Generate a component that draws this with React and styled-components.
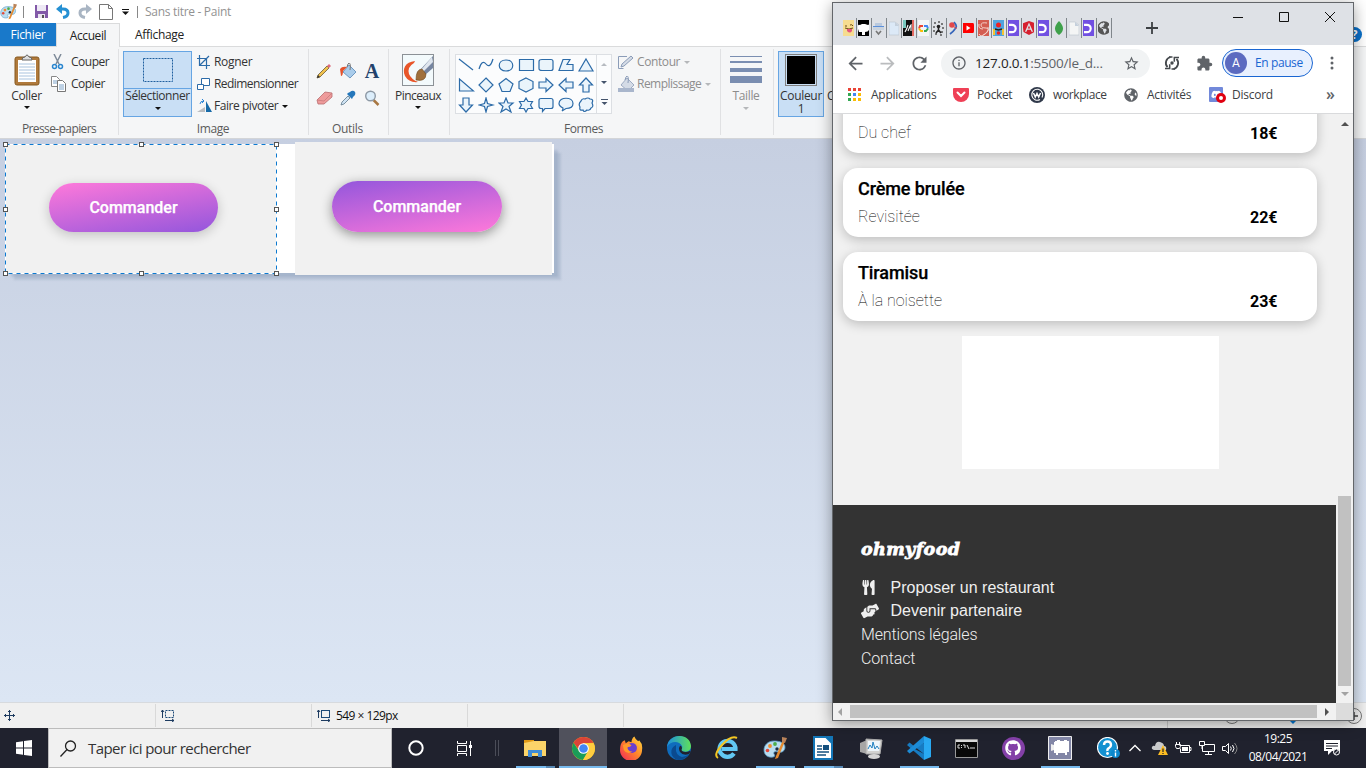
import React from "react";
import styled, { createGlobalStyle, css } from "styled-components";
import { FaUtensils, FaHandsHelping, FaDiscord, FaGithub, FaAngular, FaGlobeAmericas } from "react-icons/fa";
import { MdExtension, MdRefresh, MdStarBorder, MdInfoOutline, MdArrowBack, MdArrowForward } from "react-icons/md";

const Global = createGlobalStyle`
  * { box-sizing: border-box; }
  html, body { margin: 0; padding: 0; overflow: hidden; }
  body { font-family: "Open Sans", "Noto Sans", sans-serif; font-size: 12px; color: #222; }
  svg { display: block; flex: none; }
`;

const Desktop = styled.div`
  position: relative;
  width: 1366px;
  height: 768px;
  display: flex;
  flex-direction: column;
  overflow: hidden;
`;

/* ---------- Paint ---------- */
const PaintWindow = styled.section`
  height: 728px;
  display: flex;
  flex-direction: column;
  background: #fff;
`;
const TitleBar = styled.header`
  height: 23px;
  display: flex;
  align-items: center;
  color: #929292;
`;
const TitleIcon = styled.span`
  display: flex;
  align-items: center;
  justify-content: center;
  width: ${(p) => p.$w}px;
`;
const TitleRule = styled.i`
  width: 1px;
  height: 12px;
  background: #888;
  margin: 0 ${(p) => p.$after}px 0 ${(p) => p.$before}px;
`;
const Text = styled.span`
  font-size: ${(p) => p.$size || 12}px;
  letter-spacing: ${(p) => (p.$ls === undefined ? -0.3 : p.$ls)}px;
  white-space: nowrap;
  line-height: ${(p) => p.$lh || 16}px;
  color: ${(p) => p.$color || "inherit"};
`;
const TabBar = styled.nav`
  height: 24px;
  display: flex;
  border-bottom: 1px solid #dadbdc;
  position: relative;
`;
const RibbonTab = styled.div`
  height: 24px;
  width: ${(p) => p.$w}px;
  display: flex;
  align-items: center;
  justify-content: center;
  ${(p) => p.$kind === "file" && css`background: #1979ca; color: #fff; height: 23px;`}
  ${(p) => p.$kind === "active" && css`
    background: #f5f6f7;
    border: 1px solid #dadbdc;
    border-bottom: 0;
  `}
`;
const HelpBadge = styled.span`
  margin: 4px 4px 0 auto;
  width: 15px;
  height: 15px;
  border-radius: 50%;
  background: #0a70c9;
  color: #fff;
  font: bold 12px/15px "Open Sans", sans-serif;
  text-align: center;
`;
const Ribbon = styled.div`
  height: 92px;
  display: flex;
  background: #f5f6f7;
  border-bottom: 1px solid #d3d5d8;
`;
const Group = styled.div`
  width: ${(p) => p.$w}px;
  margin: 2px 0 3px;
  border-right: 1px solid #e0e1e3;
  display: flex;
  flex-direction: column;
`;
const GroupBody = styled.div`
  height: 74px;
  display: flex;
  align-items: flex-start;
  padding: ${(p) => p.$pad || "2px 0 0 4px"};
`;
const GroupLabel = styled.div`
  display: flex;
  justify-content: center;
  color: #5b5b5b;
  line-height: 13px;
  padding-right: ${(p) => p.$pr || 0}px;
`;
const BigButton = styled.div`
  width: ${(p) => p.$w}px;
  height: 66px;
  margin-left: ${(p) => p.$ml || 0}px;
  display: flex;
  flex-direction: column;
  align-items: center;
  border: 1px solid ${(p) => (p.$on ? "#66a5e3" : "transparent")};
  background: ${(p) => (p.$on ? "#c9dff5" : "transparent")};
  color: ${(p) => (p.$dim ? "#8d8d8d" : "#333")};
  flex: none;
`;
const BigIcon = styled.div`
  width: 100%;
  height: ${(p) => p.$h || 36}px;
  display: flex;
  align-items: center;
  justify-content: center;
  border-bottom: 1px solid ${(p) => (p.$split ? "#66a5e3" : "transparent")};
`;
const ColorLabel = styled.div`
  width: 44px;
  text-align: center;
  font-size: 12px;
  line-height: 13px;
  letter-spacing: -0.3px;
  padding-top: 1px;
`;
const Caret = styled.i`
  width: 0;
  height: 0;
  border: 3px solid transparent;
  border-top-color: ${(p) => (p.$dim ? "#b5b7ba" : p.$color || "#111")};
  border-bottom: 0;
  margin: ${(p) => p.$m || "0"};
`;
const CommandList = styled.div`
  display: flex;
  flex-direction: column;
  padding-left: ${(p) => p.$pl || 0}px;
  margin-top: ${(p) => p.$mt || 0}px;
`;
const Command = styled.div`
  height: 22px;
  display: flex;
  align-items: center;
  color: ${(p) => (p.$dim ? "#8d8d8d" : "#333")};
`;
const CommandIcon = styled.span`
  width: ${(p) => p.$w || 19}px;
  display: flex;
`;
const ToolGrid = styled.div`
  display: grid;
  grid-template-columns: repeat(3, 24px);
  grid-auto-rows: 27px;
  place-items: center;
`;
const ShapesBox = styled.div`
  width: 157px;
  height: 60px;
  display: flex;
  border: 1px solid #dcdfe3;
  background: #fbfcfd;
`;
const ShapesGrid = styled.div`
  width: 141px;
  display: grid;
  grid-template-columns: repeat(7, 20px);
  grid-auto-rows: 20px;
  place-items: center;
  border-right: 1px solid #dcdfe3;
`;
const ShapesScroll = styled.div`
  flex: 1;
  display: flex;
  flex-direction: column;
  align-items: center;
  justify-content: space-around;
`;
const Strokes = styled.div`
  width: 32px;
  height: 27px;
  display: flex;
  flex-direction: column;
  justify-content: space-between;
`;
const Stroke = styled.i`
  height: ${(p) => p.$h}px;
  background: #7a8eb1;
`;
const Swatch = styled.div`
  width: 32px;
  height: 32px;
  border: 1px solid #808080;
  background: #000;
  box-shadow: inset 0 0 0 1px #c9dff5;
`;
const Workspace = styled.main`
  flex: 1;
  background: linear-gradient(#c6cfe1, #dce6f4);
  padding: 3px 0 0 5px;
`;
const Canvas = styled.div`
  position: relative;
  width: 549px;
  height: 129px;
  margin-top: 2px;
  background: #fff;
  display: flex;
  justify-content: space-between;
  box-shadow: 5px 5px 2px -1px rgba(135, 154, 182, 0.35), 8px 8px 2px -1px rgba(135, 154, 182, 0.3);
`;
const Pasted = styled.div`
  background: #f1f1f1;
  width: ${(p) => p.$w}px;
  height: ${(p) => p.$h}px;
  margin: ${(p) => p.$m || 0};
  padding: ${(p) => p.$pad};
`;
const OrderButton = styled.div`
  width: ${(p) => p.$w}px;
  height: ${(p) => p.$h}px;
  border-radius: 26px;
  display: flex;
  align-items: center;
  justify-content: center;
  background: ${(p) => p.$bg};
  box-shadow: 0 3px 12px rgba(0, 0, 0, ${(p) => p.$shade});
  color: #fff;
  font: 500 16px Roboto, sans-serif;
  -webkit-text-stroke: 0.25px #fff;
`;
const Marquee = styled.svg`
  position: absolute;
  left: -3px;
  top: -3px;
`;
const StatusBar = styled.footer`
  height: 26px;
  background: #f0f0f0;
  border-top: 1px solid #d7dade;
  display: flex;
  position: relative;
`;
const StatusCell = styled.div`
  width: 156px;
  height: 23px;
  margin-top: 1px;
  border-right: 1px solid #d9d9d9;
  display: flex;
  align-items: center;
  gap: 5px;
  padding-left: ${(p) => p.$pl || 0}px;
  color: #111;
`;
const ZoomControls = styled.div`
  margin-left: auto;
  display: flex;
  align-items: center;
  border-left: 1px solid #ccc;
  width: 199px;
  padding-left: 56px;
`;

/* ---------- Browser window ---------- */
const Browser = styled.section`
  position: absolute;
  left: 832px;
  top: 2px;
  width: 522px;
  height: 719px;
  border: 1px solid #63666a;
  display: flex;
  flex-direction: column;
  background: #fff;
  box-shadow: 0 3px 14px rgba(0, 0, 0, 0.38);
`;
const TabStrip = styled.div`
  height: 42px;
  background: #dee1e6;
  display: flex;
  padding-left: 9px;
`;
const Favicon = styled.div`
  width: 15px;
  height: 20px;
  margin-top: 15px;
  display: flex;
  align-items: center;
  border-right: 1px solid #80868b;
`;
const FaviconClip = styled.div`
  width: 11px;
  height: 16px;
  margin-left: 1px;
  display: flex;
  align-items: center;
  justify-content: center;
  overflow: hidden;
  background: ${(p) => p.$bg || "transparent"};
`;
const NewTab = styled.div`
  margin: 19px 0 0 34px;
`;
const WindowControls = styled.div`
  margin: 8px 17px 0 auto;
  display: flex;
  gap: 34px;
`;
const Toolbar = styled.div`
  height: 36px;
  display: flex;
  align-items: center;
  padding-left: 12px;
  color: #5f6368;
`;
const NavIcon = styled.span`
  width: ${(p) => p.$w || 32}px;
  margin-left: ${(p) => p.$ml || 0}px;
  display: flex;
  color: ${(p) => p.$color || "#5f6368"};
`;
const Omnibox = styled.div`
  width: 209px;
  height: 29px;
  border-radius: 15px;
  background: #f1f3f4;
  display: flex;
  align-items: center;
  padding: 0 10px 0 10px;
  gap: 8px;
  svg:last-child { margin-left: auto; }
`;
const Host = styled.b`
  font-weight: 400;
  color: #222;
`;
const ProfilePill = styled.div`
  width: 91px;
  height: 28px;
  border: 1px solid #1a66d2;
  border-radius: 14px;
  background: #e8f0fe;
  display: flex;
  align-items: center;
  gap: 8px;
  padding-left: 2px;
`;
const Avatar = styled.span`
  width: 22px;
  height: 22px;
  border-radius: 50%;
  background: #5c6bc0;
  color: #fff;
  font: 12px/22px Roboto, sans-serif;
  text-align: center;
`;
const Kebab = styled.svg`
  margin-left: 17px;
`;
const Bookmarks = styled.div`
  height: 33px;
  display: flex;
  align-items: center;
  padding: 0 18px 4px 15px;
  border-bottom: 1px solid #d9dadc;
`;
const Bookmark = styled.div`
  width: ${(p) => p.$w}px;
  display: flex;
  align-items: center;
  gap: ${(p) => p.$gap || 8}px;
  color: #3c4043;
`;
const More = styled.span`
  margin: -2px 0 0 auto;
  color: #5f6368;
  font: 600 16px/16px "Open Sans", sans-serif;
`;
const BlockedDot = styled.i`
  width: 10px;
  height: 10px;
  margin: 6px 0 0 -14px;
  border-radius: 50%;
  border: 3px solid #e00010;
  background: #fff;
`;
const Viewport = styled.div`
  flex: 1;
  display: grid;
  grid-template-columns: 503px 17px;
  grid-template-rows: 589px 17px;
`;
const Page = styled.div`
  background: #f1f1f1;
  overflow: hidden;
  display: flex;
  flex-direction: column;
  padding-left: 10px;
`;
const Dish = styled.article`
  width: 474px;
  height: 69px;
  flex: none;
  margin-bottom: 15px;
  border-radius: 15px;
  background: #fff;
  box-shadow: 0 3px 12px rgba(0, 0, 0, 0.22);
  padding: 8px 39.500px 0 15px;
  display: grid;
  grid-template-columns: 1fr auto;
  grid-template-rows: 26px 30px;
  font-family: Roboto, sans-serif;
  color: #000;
  &:first-child { margin-top: -30px; }
`;
const DishName = styled.h3`
  grid-column: 1 / 3;
  margin: 0;
  font: 500 18px/26px Roboto, sans-serif;
  letter-spacing: -0.1px;
  -webkit-text-stroke: 0.25px #000;
`;
const DishNote = styled.span`
  font: 100 16px/30px Roboto, sans-serif;
`;
const Price = styled.b`
  font: 700 16px/32px Roboto, sans-serif;
`;
const BlankPanel = styled.div`
  width: 257px;
  height: 133px;
  flex: none;
  margin-left: 119px;
  background: #fff;
`;
const SiteFooter = styled.footer`
  margin: 36px 0 0 -10px;
  flex: 1;
  background: #333;
  color: #efefef;
  padding: 30px 0 0 28px;
`;
const Logo = styled.div`
  font: italic 700 17.500px/28px "DejaVu Serif", serif;
  color: #fff;
  -webkit-text-stroke: 0.8px #fff;
  letter-spacing: 0.4px;
  margin-bottom: 13px;
`;
const FooterLink = styled.div`
  height: ${(p) => (p.$light ? 24 : 23)}px;
  display: flex;
  align-items: center;
  font: ${(p) => (p.$light ? "300 16px Roboto, sans-serif" : '16px "Liberation Sans", sans-serif')};
  letter-spacing: ${(p) => (p.$light ? -0.15 : 0)}px;
`;
const LinkIcon = styled.span`
  width: 29.500px;
`;
const ScrollV = styled.div`
  background: #f1f1f1;
  display: flex;
  flex-direction: column;
  align-items: center;
  padding: 8px 0 7px;
`;
const ThumbV = styled.i`
  width: 13px;
  height: 190px;
  margin: 370px 0 auto;
  background: #c1c1c1;
`;
const ScrollH = styled.div`
  background: #f1f1f1;
  display: flex;
  align-items: center;
  justify-content: space-between;
  padding: 0 7px 0 5px;
`;
const ThumbH = styled.i`
  width: 467px;
  height: 13px;
  background: #c1c1c1;
`;
const Corner = styled.div`
  background: #dcdcdc;
`;
const Arrow = styled.i`
  width: 0;
  height: 0;
  border: 4px solid transparent;
  ${(p) => p.$dir === "up" && css`border-bottom-color: #505050; border-top: 0;`}
  ${(p) => p.$dir === "down" && css`border-top-color: #a3a3a3; border-bottom: 0;`}
  ${(p) => p.$dir === "left" && css`border-right-color: #a3a3a3; border-left: 0;`}
  ${(p) => p.$dir === "right" && css`border-left-color: #505050; border-right: 0;`}
`;

/* ---------- Taskbar ---------- */
const Taskbar = styled.footer`
  height: 40px;
  background: #20222e;
  display: flex;
  color: #fff;
`;
const TaskSlot = styled.div`
  width: ${(p) => p.$w || 48}px;
  height: 40px;
  margin-left: ${(p) => p.$ml || 0}px;
  display: flex;
  align-items: center;
  justify-content: center;
  flex: none;
`;
const AppSlot = styled(TaskSlot)`
  flex-direction: column;
  background: ${(p) => (p.$active ? "#50515c" : "transparent")};
`;
const AppIcon = styled.div`
  flex: 1;
  display: flex;
  align-items: center;
  padding-top: 2px;
`;
const Underline = styled.i`
  height: 2px;
  width: ${(p) => (p.$on === "full" ? 48 : 39)}px;
  background: ${(p) =>
    !p.$on ? "transparent" : p.$on === "multi" ? "linear-gradient(90deg, #76b9ed 30px, #5788b4 30px)" : "#76b9ed"};
`;
const SearchBox = styled.div`
  width: 344px;
  height: 40px;
  background: #f1f1f1;
  border: 1px solid #bcbcbc;
  display: flex;
  align-items: center;
  padding-left: 11px;
  gap: 11px;
  color: #333;
`;
const Grip = styled.div`
  width: 4px;
  height: 16px;
  margin-right: 6px;
  border: solid #4b4d58;
  border-width: 0 1px;
`;
const Clock = styled.div`
  width: 74px;
  display: flex;
  flex-direction: column;
  align-items: center;
  padding-top: 3px;
  gap: 2px;
`;

/* ---------- Drawings ---------- */
const blue = "#2c6ba8";

const Palette = ({ s = 16 }) => (
  <svg width={s} height={s} viewBox="0 0 24 24">
    <path d="M11 5C5 5 1 9 1 14s4 8 9 7c2 0 2-2 1-3-1-2 1-3 4-2 4 1 7-1 7-5 0-4-5-6-11-6z" fill="#b9dcef" stroke="#5a9cc5" strokeWidth=".8" />
    <circle cx="4.500" cy="14.500" r="1.800" fill="#e2483b" /><circle cx="7" cy="10" r="1.900" fill="#f08c2d" />
    <circle cx="12" cy="8" r="1.900" fill="#4cae4a" /><circle cx="14" cy="13" r="1.700" fill="#1d2c40" />
    <path d="M20 4l2 1-7 17-3 1 1-3z" fill="#e58a2e" /><path d="M19 1l5 1-2 5-3-1z" fill="#b9835a" />
  </svg>
);
const Save = () => (
  <svg width="15" height="15" viewBox="0 0 15 15">
    <path d="M1 1h13v13H1z" fill="#8259a8" /><path d="M3 1h9v6H3z" fill="#eee9f5" /><path d="M4 10h7v4H4z" fill="#e9e4ef" /><path d="M8 11h2v3H8z" fill="#555" />
  </svg>
);
const Undo = ({ color, flip }) => (
  <svg width="14" height="15" viewBox="0 0 14 15">
    <g transform={flip ? "translate(14 0) scale(-1 1)" : undefined}>
      <path d="M3 5h4c3.500 0 5 1.500 5 4s-2 4-5 4.500" fill="none" stroke={color} strokeWidth="3" /><path d="M0 5l6-5v10z" fill={color} />
    </g>
  </svg>
);
const NewPage = () => (
  <svg width="14" height="16" viewBox="0 0 14 16"><path d="M.5.5h9l4 4v11H.5z M9.500.5v4h4" fill="#fff" stroke="#777" /></svg>
);
const Clipboard = () => (
  <svg width="26" height="32" viewBox="0 0 26 32">
    <rect x="1" y="3" width="24" height="28" rx="2" fill="#b07a3c" stroke="#86591f" /><path d="M4 6h18v22H4z" fill="#fff" />
    <path d="M5 10h16M5 13h16M5 16h16M5 19h16M5 22h16M5 25h16" stroke="#a9c3de" /><path d="M8 6q0-3 3-3 2-4 4 0 3 0 3 3z" fill="#ddd" stroke="#666" />
  </svg>
);
const Scissors = () => (
  <svg width="13" height="16" viewBox="-1 0 13 16">
    <path d="M2 0l5 10M9 0L4 10" stroke="#7e8b99" strokeWidth="1.500" /><circle cx="2.500" cy="12.500" r="2" fill="none" stroke="#2a86cf" strokeWidth="1.500" /><circle cx="8.500" cy="12.500" r="2" fill="none" stroke="#2a86cf" strokeWidth="1.500" />
  </svg>
);
const Copy = () => (
  <svg width="16" height="16" viewBox="0 0 16 16">
    <path d="M.5.5h5l3 3v7h-8z" fill="#fff" stroke="#888" /><path d="M2 5h4M2 7h4" stroke="#7da3c9" />
    <path d="M6.500 4.500h5l3 3v8h-8z" fill="#fff" stroke="#777" /><path d="M8 9h5M8 11h5M8 13h5" stroke="#7da3c9" />
  </svg>
);
const SelectRect = () => (
  <svg width="32" height="26" viewBox="0 0 32 26"><rect x="1.500" y="1.500" width="29" height="23" fill="none" stroke="#1f5f9e" strokeDasharray="2 1" /></svg>
);
const Crop = () => (
  <svg width="13" height="14" viewBox="0 0 13 14"><path d="M0 3.500h9.500V14M2.500 0v10.500H13M3 10L12 1" fill="none" stroke={blue} strokeWidth="1.200" /></svg>
);
const Resize = () => (
  <svg width="13" height="13" viewBox="0 0 13 13"><path d="M4.500.5h8v7h-8z" fill="#fff" stroke={blue} /><path d="M.5 6.500h6v5h-6z" fill="#fff" stroke={blue} /></svg>
);
const Rotate = () => (
  <svg width="15" height="14" viewBox="0 0 15 14"><path d="M0 13h8V8z" fill="#b9bcc0" /><path d="M9 2v11h6z" fill="#176aa8" /><path d="M3 5q0-3 4-3M5 0l2 2-2 2" stroke="#2b84d6" fill="none" /></svg>
);
const Pencil = () => (
  <svg width="16" height="16" viewBox="0 0 16 16"><path d="M1 15l1-3L11 3l2 2-9 9z" fill="#f0c14c" stroke="#6b5a35" strokeWidth=".8" /><path d="M11 3l2-2 2 2-2 2z" fill="#de6b7b" /><path d="M1 15l1-3 2 2z" fill="#333" /></svg>
);
const Bucket = ({ dim }) => (
  <svg width="17" height="16" viewBox="0 0 17 16"><path d="M9 2l7 7-6 6-7-6z" fill={dim ? "#d4dbe6" : "#a9cceb"} stroke={dim ? "#8b9cb8" : "#5787b6"} strokeWidth=".8" /><path d="M7 4q1-4 2-4 2 0 1 7" stroke={dim ? "#8b9cb8" : "#777"} fill="none" /><path d={dim ? "M0 12h16v4H0z" : "M7 4Q2 3 0 6l1 7q2 0 2-5z"} fill={dim ? "#a9b6cc" : "#e4532d"} /></svg>
);
const LetterA = styled.span`
  font: bold 20px/18px "Liberation Serif", serif;
  color: #23426c;
`;
const Eraser = () => (
  <svg width="17" height="14" viewBox="0 0 17 14"><path d="M1 9l8-8 7 1v4l-8 7H2z" fill="#ee9b9b" stroke="#b86d70" strokeWidth=".8" /><path d="M1 9l7 1 8-8" stroke="#c97b7d" fill="none" strokeWidth=".8" /></svg>
);
const Dropper = () => (
  <svg width="16" height="16" viewBox="0 0 16 16"><path d="M1 15l1-3 6-6 2 2-6 6z" fill="#cfe3f3" stroke="#60788c" strokeWidth=".8" /><path d="M7 4l5 5 1-2 2-2q1-3-1-4t-4 1L8 3z" fill="#2577bb" /></svg>
);
const Magnifier = () => (
  <svg width="16" height="16" viewBox="0 0 15 16"><path d="M9 10l5 5" stroke="#a87742" strokeWidth="2.500" /><circle cx="6" cy="6" r="4.800" fill="#dceefb" stroke="#8d99a5" strokeWidth="1.400" /></svg>
);
const Brush = () => (
  <svg width="32" height="32" viewBox="0 0 32 32"><rect x=".5" y=".5" width="31" height="31" fill="#f3fafc" stroke="#8c9196" /><path d="M13 7C3 8 0 15 3 22q4 7 13 6-7-3-9-8-2-7 5-11z" fill="#e8562a" /><path d="M31 2v12l-8 7-5-5z" fill="#7685a0" /><path d="M30 3L19 16l2 2L31 8z" fill="#dfe6ee" /><path d="M14 26q0-11 6-11l4 5q0 8-10 6z" fill="#a0703c" stroke="#6f4a20" strokeWidth=".6" /></svg>
);
const ContourIcon = () => (
  <svg width="16" height="14" viewBox="0 0 16 14"><path d="M9 1.500H.5v12h5" fill="none" stroke="#8b9cb8" /><path d="M3 12l1-3 9-8 2 2-9 8z" fill="#d4dbe6" stroke="#8b9cb8" /></svg>
);
const shapePaths = [
  "M1 2l14 11", "M1 12Q4 2 8 7t7-5", "M8 3c9 0 9 11 0 11S-1 3 8 3z", "M1.500 2.500h14v11h-14z",
  "M4 2.500h9q2 0 2 2v7q0 2-2 2H4q-3 0-3-2v-7q0-2 3-2z", "M1 13.500L5 2.500h7l-3 5h6v6z", "M8 2l7 12H1z",
  "M1.500 2v12h14z", "M8 1l7 7-7 7-7-7z", "M8 1.500l7 5.500-3 7.500H4L1 7z", "M8 1l7 3.500v7L8 15l-7-3.500v-7z",
  "M1 5h7V1.500L15 8l-7 6.500V11H1z", "M15 5H8V1.500L1 8l7 6.500V11h7z", "M5 15V8H1.500L8 1l6.500 7H11v7z",
  "M5 1v7H1.500L8 15l6.500-7H11V1z", "M8 1l1.500 5.500L15 8 9.500 9.500 8 15 6.500 9.500 1 8l5.500-1.500z",
  "M8 1l2 5h5l-4 3.500L13 15l-5-3-5 3 2-5.500L1 6h5z", "M8 1l2 3.500h4.500L12.500 8l2 3.500H10L8 15l-2-3.500H1.500L3.500 8l-2-3.500H6z",
  "M3 1.500h10q2 0 2 2v6q0 2-2 2H7L4.500 14.500v-3H3q-2 0-2-2v-6q0-2 2-2z", "M4 14q1-1 1-3-4-2-4-4.500c0-7 14-7 14 0q0 5-7 5z",
  "M3 4q1-3 4-2 3-2 5 0 4 0 2 4 2 4-1 5-1 3-4 2-3 3-4 0-4 1-3-3-2-3 1-6z",
];
const ShapeIcon = ({ d }) => (
  <svg width="17" height="16" viewBox="0 0 17 16"><path d={d} fill={d.endsWith("z") ? "#eaf4fb" : "none"} stroke={blue} strokeWidth="1.200" /></svg>
);
const MoveIcon = () => (
  <svg width="12" height="12" viewBox="0 0 12 12"><path d="M5.500 0v11M0 5.500h11M4 2l1.500-1.500L7 2M4 9l1.500 1.500L7 9M2 4L.5 5.500 2 7M9 4l1.500 1.500L9 7" fill="none" stroke="#1d3b60" /></svg>
);
const SizeIcon = ({ dashed }) => (
  <svg width="14" height="13" viewBox="0 0 14 13"><rect x="4.500" y="1.500" width="8" height="7" fill="none" stroke="#1d4a78" strokeDasharray={dashed ? "2 1" : undefined} /><path d="M1.500 1v8M0 3l1.500-2L3 3M4 11.500h9M11 10l2 1.500L11 13" stroke="#1d3b60" fill="none" /></svg>
);
const handles = [[0, 0], [136, 0], [271, 0], [0, 65], [271, 65], [0, 129], [136, 129], [271, 129]];
const SelectionMarquee = () => (
  <Marquee width="278" height="136" viewBox="0 0 278 136">
    <rect x="3.500" y="3.500" width="271" height="129" fill="none" stroke="#fff" />
    <rect x="3.500" y="3.500" width="271" height="129" fill="none" stroke="#0b79d0" strokeDasharray="4 4" />
    {handles.map(([x, y]) => <rect key={x + "-" + y} x={x + 1.5} y={y + 1.5} width="4" height="4" fill="#fff" stroke="#555" />)}
  </Marquee>
);

const PlusIcon = () => <svg width="12" height="12" viewBox="0 0 12 12"><path d="M6 0v12M0 6h12" stroke="#3c4043" strokeWidth="1.800" /></svg>;
const AppsGrid = () => (
  <svg width="14" height="14" viewBox="0 0 14 14">
    {["#ea4335", "#ea4335", "#ea4335", "#34a853", "#4285f4", "#fbbc05", "#34a853", "#fbbc05", "#fbbc05"].map((c, i) => (
      <rect key={i} x={(i % 3) * 5} y={Math.floor(i / 3) * 5} width="3" height="3" fill={c} />
    ))}
  </svg>
);
const PocketIcon = () => <svg width="16" height="14" viewBox="0 0 16 14"><path d="M1 0h14q1 0 1 1v5a8 8 0 0 1-16 0V1q0-1 1-1z" fill="#ef4056" /><path d="M4.500 4.500L8 8l3.500-3.500" fill="none" stroke="#fff" strokeWidth="2" strokeLinecap="round" /></svg>;
const WorkplaceIcon = () => <svg width="16" height="16" viewBox="0 0 16 16"><circle cx="8" cy="8" r="8" fill="#30394a" /><path d="M11 12.500A5.500 5.500 0 1 1 13 10.500" fill="none" stroke="#fff" strokeWidth="1.100" /><path d="M4.500 6l1.800 4L8 6.500 9.700 10l1.800-4" fill="none" stroke="#fff" strokeWidth="1.500" /></svg>;
const SyncDot = () => (
  <svg width="16" height="16" viewBox="0 0 16 16"><path d="M6.500 2A6.200 6.200 0 0 0 3.500 12.200M9.500 14A6.200 6.200 0 0 0 12.500 3.800" fill="none" stroke="#45494d" strokeWidth="1.800" /><path d="M1 13.500h4.700V9.200M15 2.500h-4.700v4.300M8.500 2H5M7.500 14H11" fill="none" stroke="#45494d" strokeWidth="1.500" /><circle cx="8" cy="8" r="1.700" fill="#45494d" /></svg>
);

/* Taskbar drawings */
const Windows = () => <svg width="16" height="16" viewBox="0 0 16 16"><path d="M0 2.200l7-1v6.300H0zM8 1l8-1v7.500H8zM0 8.500h7v6.300l-7-1zM8 8.500h8V16l-8-1z" fill="#fff" /></svg>;
const Search = () => <svg width="17" height="17" viewBox="0 0 17 17"><circle cx="10.500" cy="6" r="5" fill="none" stroke="#222" strokeWidth="1.300" /><path d="M7 9.500l-6.500 7" stroke="#222" strokeWidth="1.300" /></svg>;
const Cortana = () => <svg width="16" height="16" viewBox="0 0 16 16"><circle cx="8" cy="8" r="6.700" fill="none" stroke="#fff" strokeWidth="2" /></svg>;
const TaskView = () => <svg width="17" height="15" viewBox="0 0 17 15"><path d="M1.500 0v2.500h9V0M1.500 15v-2.500h9V15M1.500 4.500h9v6h-9zM14.500 0v15" fill="none" stroke="#fff" /><path d="M13 4h3v3h-3z" fill="#fff" /></svg>;
const Folder = () => <svg width="22" height="19" viewBox="0 0 22 19"><path d="M0 1h10v4H0z" fill="#e19a14" /><path d="M0 4l10-2h12v15H0z" fill="#fbd469" /><path d="M4 18V11h14v7h-4v-4H8v4z" fill="#3f8cd6" /></svg>;
const Chrome = () => (
  <svg width="23" height="23" viewBox="0 0 24 24"><circle cx="12" cy="12" r="12" fill="#fbc116" /><path d="M1.600 6A12 12 0 0 1 22.400 6L12 6.500 7 13z" fill="#db4437" /><path d="M1.600 6A12 12 0 0 0 11.500 24L17 15 7 14z" fill="#1a9d58" /><path d="M12 6.500h10.600A12 12 0 0 1 11.500 24L17 14z" fill="#ffcd40" /><circle cx="12" cy="12" r="5.600" fill="#fff" /><circle cx="12" cy="12" r="4.500" fill="#4285f4" /></svg>
);
const Firefox = () => (
  <svg width="23" height="24" viewBox="0 0 24 24"><defs><linearGradient id="ff" x1="1" y1="0" x2="0" y2="1"><stop offset="0" stopColor="#ffe141" /><stop offset=".45" stopColor="#ff8a2a" /><stop offset="1" stopColor="#f0235a" /></linearGradient></defs>
    <path d="M3 5l2-1 1 3 3-2 3 1q0-4 3-6 1 3 4 5l1-1q4 4 3 10a11.500 11.500 0 0 1-23 0Q0 8 3 5z" fill="url(#ff)" /><circle cx="12.500" cy="12" r="5.200" fill="#6a3fd0" /><path d="M3 9q5-3 9 0-1 2-4 2-1 4 5 5-6 3-9-2z" fill="#ff9a2b" /></svg>
);
const Edge = () => (
  <svg width="24" height="24" viewBox="0 0 24 24"><defs><linearGradient id="ed"><stop offset="0" stopColor="#1b8fe0" /><stop offset="1" stopColor="#5fe05a" /></linearGradient></defs>
    <circle cx="12" cy="12" r="12" fill="#0f6cbd" /><path d="M0 11C1-3 23-4 24 10c0 5-5 7-9 5-2-1 1-2 0-5C12 4 3 5 0 11z" fill="url(#ed)" /><path d="M9 11q-1 8 6 10 4 0 7-3-4 6-11 6C3 22 2 12 9 9z" fill="#0a4a8f" /><path d="M13 10q-2 2 0 6 3 4 9 2l1-1.500q1-1 0-1.500-5 2-8 0-1-1 0-3-1-3-2-2z" fill="#20222e" /></svg>
);
const IE = () => (
  <svg width="24" height="24" viewBox="0 0 24 24"><path d="M19 17.500A8 8 0 1 1 20.500 13H7" fill="none" stroke="#62c8f3" strokeWidth="4.200" /><path d="M3 22Q-2 19 7 9T22 2" fill="none" stroke="#f3c622" strokeWidth="2" /></svg>
);
const Writer = () => (
  <svg width="20" height="24" viewBox="0 0 20 24"><path d="M1 1h12l6 6v16H1z" fill="#fff" stroke="#1477b8" strokeWidth="2" /><path d="M13 0l7 7V0z" fill="#1477b8" /><path d="M4 10h5M4 13h5M4 16h12M4 19h9" stroke="#14507e" strokeWidth="1.600" /><path d="M10 9h6v5h-6z" fill="#14507e" /></svg>
);
const Monitor = () => (
  <svg width="23" height="21" viewBox="0 0 23 21"><path d="M0 5l7-3v14l-7-2z" fill="#a6a6a6" /><path d="M6 1l16 1-2 14H6z" fill="#d3d3d1" stroke="#aaa" /><path d="M8 3h12l-1 10H8z" fill="#eef6fb" /><path d="M8 11l2-4 2 3 1-6 2 7 2-3 2 3" stroke="#2180c0" fill="none" /><ellipse cx="14" cy="18.500" rx="6" ry="2.500" fill="#d5d5d5" /></svg>
);
const VsCode = () => (
  <svg width="24" height="24" viewBox="0 0 24 24"><path d="M17 7L7 12.500 17 18v6L0 9l2.500-2.500L17 18z" fill="#167bc2" /><path d="M17 0L0 15l2.500 2.500L17 7z" fill="#1c8bd6" /><path d="M17 0l7 3v18l-7 3z" fill="#29a9f2" /></svg>
);
const Cmd = () => (
  <svg width="23" height="19" viewBox="0 0 23 19"><path d="M.5.5h22v18H.5z" fill="#080808" stroke="#999" /><path d="M1 1h21v2H1z" fill="#d9d9d9" /><path d="M5 6H3v3h2M6.500 6v1m0 1v1M8 6h2v3M12 6l2 4M15 9h5" stroke="#ddd" fill="none" /></svg>
);
const GitDisc = styled.span`
  width: 23px;
  height: 23px;
  border-radius: 50%;
  background: #8440a8;
  display: flex;
  align-items: center;
  justify-content: center;
`;
const Camera = () => (
  <svg width="24" height="24" viewBox="0 0 24 24"><path d="M.5.5h23v23H.5z" fill="#8286a6" stroke="#eee" /><path d="M7 5h2V4h3v1h4V4h3v1h2v11h-2v3h-2v-2H10v2H8v-2H6V6h1z" fill="#fff" /><path d="M3 8l3 1v5l-3 1z" fill="#eee" /></svg>
);
const HelpIcon = () => (
  <svg width="23" height="22" viewBox="0 0 23 22"><circle cx="10.500" cy="10.500" r="10" fill="#1391d1" stroke="#fff" strokeWidth="1.200" /><path d="M7 8q0-3.500 3.500-3.500T14 8q0 2-2 3t-1.500 3" fill="none" stroke="#fff" strokeWidth="2.400" /><circle cx="10.500" cy="16.500" r="1.400" fill="#fff" /><circle cx="18.500" cy="16.500" r="4.500" fill="#0c87cc" /><path d="M18.500 15.500v4M18.500 13v1.400" stroke="#fff" strokeWidth="1.400" /></svg>
);
const TrayIcon = ({ kind }) => {
  const stroke = { fill: "none", stroke: "#fff" };
  if (kind === "caret") return <svg width="12" height="8" viewBox="0 0 12 8"><path d="M.5 7L6 1.500 11.500 7" {...stroke} strokeWidth="1.300" /></svg>;
  if (kind === "cloud") return <svg width="17" height="14" viewBox="0 0 17 14"><path d="M3 9q-3-1-2-3t3-1q1-5 5-4t4 4q3 0 2 4z" fill="#c9cacc" /><path d="M12 4l5 10H7z" fill="#fdbd22" /><path d="M12 7.500v3.500M12 12v1" stroke="#222" strokeWidth="1.200" /></svg>;
  if (kind === "battery") return <svg width="17" height="12" viewBox="0 0 17 12"><path d="M4.500 3.500h10v7h-9v-4M15 5.500h1v3h-1M.5 2.500h5v2l-1 2h-3l-1-2zM1.500 0v2M4.500 0v2" {...stroke} /><path d="M7 5h6v4H7z" fill="#fff" /></svg>;
  if (kind === "network") return <svg width="16" height="14" viewBox="0 0 16 14"><path d="M5.500 3.500h10v7h-12V5M9.500 11v2M6 13.500h7M.5.5h5v4h-5zM3 5v3" {...stroke} /></svg>;
  if (kind === "sound") return <svg width="16" height="13" viewBox="0 0 16 13"><path d="M.5 4.500h3l3-3v10l-3-3h-3zM8.500 4.500q1.500 2 0 4M10.500 3q3 3.500 0 7" {...stroke} /><path d="M12.500 1q5 5.500 0 11" fill="none" stroke="#888" /></svg>;
  return <svg width="17" height="16" viewBox="0 0 17 16"><path d="M0 0h16v11H8l-4 4v-4H0z" fill="#fff" /><path d="M2 3.500h12M2 6h12M2 8.500h6" stroke="#20222e" /><circle cx="12.500" cy="12" r="3" fill="#20222e" stroke="#fff" /><path d="M10.500 14l4-4" stroke="#fff" /></svg>;
};

const DLogo = () => <svg width="11" height="15" viewBox="0 0 11 15"><path d="M1 3.800h3a3.700 3.700 0 0 1 0 7.400H1" fill="none" stroke="#fff" strokeWidth="2.200" /></svg>;
const PageFav = ({ c }) => <svg width="10" height="15" viewBox="0 0 10 15"><path d="M0 1h6l4 3v10H0z" fill={c} stroke="#b9c3cd" strokeWidth=".6" /><path d="M6 1v4h4z" fill="#c5d0dc" /></svg>;
const purpleSite = { bg: "#7150e2", icon: <DLogo /> };
const favicons = [
  { bg: "#f6dc8f", icon: <svg width="10" height="13" viewBox="0 0 10 13"><path d="M1 4h2M6 3q2-1 3 1M1 6q4 2 8 0" stroke="#6b4a13" fill="none" /><path d="M3 7h5v2q-2 3-5 0z" fill="#e4567d" /></svg> },
  { bg: "#000", icon: <svg width="11" height="15" viewBox="0 0 11 15"><path d="M0 5q0-2 2-1l2-1h3l3 1q1-1 1 0v5q-1 2-4 2v3H4v-3H1l-1-3z" fill="#fff" /></svg> },
  { icon: <svg width="11" height="15" viewBox="0 0 11 15"><path d="M2 2h7v3H2z" fill="#b9c9de" /><path d="M0 6h11v3H0z" fill="#c9d3df" /><path d="M0 5.500h11" stroke="#5c90da" /><path d="M3 10l2.500 3L8 10" fill="none" stroke="#777" strokeWidth="1.600" /></svg> },
  { icon: <PageFav c="#dce9f7" /> },
  { bg: "#111", icon: <svg width="11" height="16" viewBox="0 0 11 16"><path d="M0 0h3v8H0z" fill="#7ac9bf" /><path d="M9 0h2v16H9z" fill="#e36b63" /><path d="M2 12q2-3 3-7M5 11q2-5 3-6v6" stroke="#fff" fill="none" strokeWidth="1.100" /></svg> },
  { bg: "#f3f5f7", icon: <svg width="11" height="9" viewBox="0 0 11 9"><path d="M5 2L2 2 1 4.500" stroke="#ea4335" fill="none" strokeWidth="2" /><path d="M1 4.500L3 7h2" stroke="#fbbc05" fill="none" strokeWidth="2" /><path d="M6 2h3l1 2.500" stroke="#4285f4" fill="none" strokeWidth="2" /><path d="M10 4.500L8 7H6" stroke="#35a853" fill="none" strokeWidth="2" /></svg> },
  { icon: <svg width="11" height="15" viewBox="0 0 11 15"><path d="M1 2h2M5 1h2M8 3h2M0 6h2M9 7h2M0 10h2M8 11h2M2 13h2M7 14h2" stroke="#555" strokeWidth="1.500" /><circle cx="5.500" cy="5.500" r="1.800" fill="#222" /><path d="M3 12l2.500-3L8 12M5.500 7v3" stroke="#222" fill="none" strokeWidth="1.600" /></svg> },
  { icon: <svg width="11" height="15" viewBox="0 0 11 15"><circle cx="4" cy="4" r="2.800" fill="#e2474b" /><path d="M6 1q4 4 1 7-2 3-5 5" fill="none" stroke="#3665ba" strokeWidth="1.700" /><path d="M5 5q3 3 4 2" stroke="#e2474b" fill="none" /></svg> },
  { icon: <svg width="11" height="12" viewBox="0 0 11 12"><path d="M0 1h10q1 0 1 2v6q0 2-1 2H0z" fill="#f00" /><path d="M3.500 3.500l4 2.500-4 2.500z" fill="#fff" /></svg> },
  { bg: "#d35d51", icon: <svg width="11" height="15" viewBox="0 0 11 15"><path d="M9 2Q3 1 3 4t5 3 0 5-7 1M1 3q-1 5 4 5M10 6q1 6-5 8" stroke="#f4d0c9" fill="none" /></svg> },
  { bg: "#4ea3de", icon: <svg width="11" height="15" viewBox="0 0 11 15"><circle cx="5.500" cy="4" r="2.500" fill="#e22" /><path d="M0 8h2v6H0zM9 8h2v6H9z" fill="#f5c431" /><circle cx="5.500" cy="12" r="1.800" fill="#e22" /><path d="M2 8l3.500 1L9 8" stroke="#222" fill="none" strokeWidth="1.400" /></svg> },
  purpleSite,
  { icon: <FaAngular size={16} color="#d6202f" /> },
  purpleSite,
  { icon: <svg width="10" height="15" viewBox="0 0 10 15"><path d="M5 0q8 8 0 14Q-3 8 5 0z" fill="#3fa14b" /></svg> },
  { icon: <PageFav c="#f4f5f5" /> },
  purpleSite,
  { icon: <FaGlobeAmericas size={14} color="#555" /> },
];

const dishes = [
  { name: "", note: "Du chef", price: "18€" },
  { name: "Crème brulée", note: "Revisitée", price: "22€" },
  { name: "Tiramisu", note: "À la noisette", price: "23€" },
];

const apps = [
  { icon: <Folder />, on: "multi" },
  { icon: <Chrome />, on: "full", active: true },
  { icon: <Firefox /> },
  { icon: <Edge /> },
  { icon: <IE /> },
  { icon: <Palette s={24} />, on: "one" },
  { icon: <Writer />, on: "multi" },
  { icon: <Monitor /> },
  { icon: <VsCode />, on: "one" },
  { icon: <Cmd />, w: 46 },
  { icon: <GitDisc><FaGithub size={16} color="#fff" /></GitDisc> },
  { icon: <Camera />, on: "one", w: 46 },
];
const tray = [["caret", 24], ["cloud", 24], ["battery", 24], ["network", 24], ["sound", 22]];

function PaintRibbon() {
  return (
    <Ribbon>
      <Group $w={119}>
        <GroupBody $pad="2px 0 0 3px">
          <BigButton $w={47}>
            <BigIcon><Clipboard /></BigIcon>
            <Text>Coller</Text><Caret $m="2px 0 0" />
          </BigButton>
          <CommandList $pl={1}>
            <Command><CommandIcon $w={20}><Scissors /></CommandIcon><Text $ls={-0.5}>Couper</Text></Command>
            <Command><CommandIcon $w={20}><Copy /></CommandIcon><Text $ls={-0.5}>Copier</Text></Command>
          </CommandList>
        </GroupBody>
        <GroupLabel><Text $lh={13} $ls={-0.6}>Presse-papiers</Text></GroupLabel>
      </Group>
      <Group $w={190}>
        <GroupBody>
          <BigButton $w={69} $on>
            <BigIcon $split $h={37}><SelectRect /></BigIcon>
            <Text $lh={14} $ls={-0.45}>Sélectionner</Text><Caret $m="4px 0 0" />
          </BigButton>
          <CommandList $pl={5}>
            <Command><CommandIcon $w={17}><Crop /></CommandIcon><Text $ls={-0.3}>Rogner</Text></Command>
            <Command><CommandIcon $w={17}><Resize /></CommandIcon><Text $ls={-0.57}>Redimensionner</Text></Command>
            <Command><CommandIcon $w={17}><Rotate /></CommandIcon><Text $ls={-0.45}>Faire pivoter</Text><Caret $m="0 0 0 4px" /></Command>
          </CommandList>
        </GroupBody>
        <GroupLabel $pr={1}><Text $lh={13} $ls={-0.4}>Image</Text></GroupLabel>
      </Group>
      <Group $w={80}>
        <GroupBody $pad="8px 0 0 3px">
          <ToolGrid><Pencil /><Bucket /><LetterA>A</LetterA><Eraser /><Dropper /><Magnifier /></ToolGrid>
        </GroupBody>
        <GroupLabel $pr={2}><Text $lh={13}>Outils</Text></GroupLabel>
      </Group>
      <Group $w={61}>
        <GroupBody $pad="2px 0 0 2px">
          <BigButton $w={54}>
            <BigIcon><Brush /></BigIcon>
            <Text $ls={-0.55}>Pinceaux</Text><Caret $m="2px 0 0" />
          </BigButton>
        </GroupBody>
      </Group>
      <Group $w={271}>
        <GroupBody $pad="5px 0 0 5px">
          <ShapesBox>
            <ShapesGrid>{shapePaths.map((p) => <ShapeIcon key={p} d={p} />)}</ShapesGrid>
            <ShapesScroll>
              <svg width="6" height="3" viewBox="0 0 6 3"><path d="M3 0l3 3H0z" fill="#b7bbc1" /></svg>
              <Caret $color="#44546c" />
              <svg width="7" height="7" viewBox="0 0 7 7"><path d="M0 .5h7" stroke="#44546c" /><path d="M.5 3h6L3.500 6z" fill="#44546c" /></svg>
            </ShapesScroll>
          </ShapesBox>
          <CommandList $pl={6} $mt={-3}>
            <Command $dim><CommandIcon><ContourIcon /></CommandIcon><Text $ls={-0.4}>Contour</Text><Caret $dim $m="0 0 0 4px" /></Command>
            <Command $dim><CommandIcon><Bucket dim /></CommandIcon><Text $ls={-0.52}>Remplissage</Text><Caret $dim $m="0 0 0 4px" /></Command>
          </CommandList>
        </GroupBody>
        <GroupLabel $pr={3}><Text $lh={13} $ls={-0.5}>Formes</Text></GroupLabel>
      </Group>
      <Group $w={53}>
        <GroupBody>
          <BigButton $w={42} $dim>
            <BigIcon $h={36}><Strokes>{[1, 2, 4, 7].map((h) => <Stroke key={h} $h={h} />)}</Strokes></BigIcon>
            <Text $ls={-0.35}>Taille</Text><Caret $dim $m="3px 0 0" />
          </BigButton>
        </GroupBody>
      </Group>
      <GroupBody $pad="4px 0 0 4px">
        <BigButton $w={46} $on>
          <BigIcon><Swatch /></BigIcon>
          <ColorLabel>Couleur 1</ColorLabel>
        </BigButton>
        <BigButton $w={46} $ml={1}>
          <BigIcon><Swatch /></BigIcon>
          <ColorLabel>Couleur 2</ColorLabel>
        </BigButton>
      </GroupBody>
    </Ribbon>
  );
}

function Paint() {
  return (
    <PaintWindow>
      <TitleBar>
        <TitleIcon $w={16}><Palette s={17} /></TitleIcon>
        <TitleRule $before={7} $after={9} />
        <TitleIcon $w={16}><Save /></TitleIcon>
        <TitleIcon $w={28}><Undo color="#2590d3" /></TitleIcon>
        <TitleIcon $w={16}><Undo color="#a9b5c3" flip /></TitleIcon>
        <TitleIcon $w={26}><NewPage /></TitleIcon>
        <TitleIcon $w={13}><svg width="7" height="6" viewBox="0 0 7 6"><path d="M0 .5h7" stroke="#111" /><path d="M0 2.500h7L3.500 6z" fill="#111" /></svg></TitleIcon>
        <TitleRule $before={5} $after={7} />
        <Text>Sans titre - Paint</Text>
      </TitleBar>
      <TabBar>
        <RibbonTab $w={56} $kind="file"><Text>Fichier</Text></RibbonTab>
        <RibbonTab $w={64} $kind="active"><Text $ls={-0.4}>Accueil</Text></RibbonTab>
        <RibbonTab $w={79}><Text>Affichage</Text></RibbonTab>
        <HelpBadge>?</HelpBadge>
      </TabBar>
      <PaintRibbon />
      <Workspace>
        <Canvas>
          <Pasted $w={272} $h={129} $pad="39px 0 0 44px">
            <OrderButton $w={169} $h={49} $shade={0.2} $bg="linear-gradient(170deg, #ff79da, #9356dc)">Commander</OrderButton>
          </Pasted>
          <Pasted $w={257} $h={133} $m="-2px 2px 0 0" $pad="39px 0 0 37px">
            <OrderButton $w={170} $h={51} $shade={0.4} $bg="linear-gradient(170deg, #9356dc, #ff79da)">Commander</OrderButton>
          </Pasted>
          <SelectionMarquee />
        </Canvas>
      </Workspace>
      <StatusBar>
        <StatusCell $pl={4}><MoveIcon /></StatusCell>
        <StatusCell $pl={5}><SizeIcon dashed /></StatusCell>
        <StatusCell $pl={5}><SizeIcon /><Text $ls={-0.55}>549 × 129px</Text></StatusCell>
        <StatusCell />
        <ZoomControls>
          <svg width="143" height="18" viewBox="0 0 143 18"><circle cx="8" cy="9" r="7.500" fill="#f0f0f0" stroke="#777" /><path d="M65 4h8v9l-4 4-4-4z" fill="#0078d7" /><circle cx="130" cy="9" r="7.500" fill="#f0f0f0" stroke="#777" /><path d="M126 9h8M130 5v8" stroke="#444" strokeWidth="1.500" /></svg>
        </ZoomControls>
      </StatusBar>
    </PaintWindow>
  );
}

function BrowserWindow() {
  return (
    <Browser>
      <TabStrip>
        {favicons.map((f, i) => <Favicon key={i}><FaviconClip $bg={f.bg}>{f.icon}</FaviconClip></Favicon>)}
        <NewTab><PlusIcon /></NewTab>
        <WindowControls>
          <svg width="12" height="12" viewBox="0 0 12 12"><path d="M1 6.500h10" stroke="#111" /></svg>
          <svg width="12" height="12" viewBox="0 0 12 12"><path d="M1.500 1.500h9v9h-9z" fill="none" stroke="#111" /></svg>
          <svg width="12" height="12" viewBox="0 0 12 12"><path d="M1 1l10 10M11 1L1 11" stroke="#111" /></svg>
        </WindowControls>
      </TabStrip>
      <Toolbar>
        <NavIcon><MdArrowBack size={21} /></NavIcon>
        <NavIcon $color="#babcbe"><MdArrowForward size={21} /></NavIcon>
        <NavIcon $w={32}><MdRefresh size={21} /></NavIcon>
        <Omnibox>
          <MdInfoOutline size={16} />
          <Text $size={13.5} $ls={-0.2}><Host>127.0.0.1</Host>:5500/le_d...</Text>
          <MdStarBorder size={17} />
        </Omnibox>
        <NavIcon $w={32} $ml={14}><SyncDot /></NavIcon>
        <NavIcon $w={26}><MdExtension size={17} /></NavIcon>
        <ProfilePill><Avatar>A</Avatar><Text $ls={-0.4} $color="#1a66d2">En pause</Text></ProfilePill>
        <Kebab width="4" height="14" viewBox="0 0 4 14"><circle cx="2" cy="2" r="1.500" fill="#5f6368" /><circle cx="2" cy="7" r="1.500" fill="#5f6368" /><circle cx="2" cy="12" r="1.500" fill="#5f6368" /></Kebab>
      </Toolbar>
      <Bookmarks>
        <Bookmark $w={105} $gap={9}><AppsGrid /><Text $ls={-0.25}>Applications</Text></Bookmark>
        <Bookmark $w={76}><PocketIcon /><Text $ls={-0.4}>Pocket</Text></Bookmark>
        <Bookmark $w={95}><WorkplaceIcon /><Text $ls={-0.4}>workplace</Text></Bookmark>
        <Bookmark $w={85} $gap={9}><FaGlobeAmericas size={14} color="#5f6368" /><Text $ls={-0.25}>Activités</Text></Bookmark>
        <Bookmark $w={70} $gap={6}>
          <svg width="15" height="16" viewBox="0 0 15 16"><rect width="14" height="15" rx="1" fill="#7289da" /><g transform="translate(2 2)"><FaDiscord size={11} color="#fff" /></g></svg>
          <BlockedDot /><Text $ls={-0.25}>Discord</Text>
        </Bookmark>
        <More>»</More>
      </Bookmarks>
      <Viewport>
        <Page>
          {dishes.map((item) => (
            <Dish key={item.price}>
              <DishName>{item.name}</DishName>
              <DishNote>{item.note}</DishNote>
              <Price>{item.price}</Price>
            </Dish>
          ))}
          <BlankPanel />
          <SiteFooter>
            <Logo>ohmyfood</Logo>
            <FooterLink><LinkIcon><FaUtensils size={15} /></LinkIcon>Proposer un restaurant</FooterLink>
            <FooterLink><LinkIcon><FaHandsHelping size={18} /></LinkIcon>Devenir partenaire</FooterLink>
            <FooterLink $light>Mentions légales</FooterLink>
            <FooterLink $light>Contact</FooterLink>
          </SiteFooter>
        </Page>
        <ScrollV><Arrow $dir="up" /><ThumbV /><Arrow $dir="down" /></ScrollV>
        <ScrollH><Arrow $dir="left" /><ThumbH /><Arrow $dir="right" /></ScrollH>
        <Corner />
      </Viewport>
    </Browser>
  );
}

export default function App() {
  return (
    <Desktop>
      <Global />
      <Paint />
      <BrowserWindow />
      <Taskbar>
        <TaskSlot><Windows /></TaskSlot>
        <SearchBox><Search /><Text $size={15} $lh={20} $ls={-0.57}>Taper ici pour rechercher</Text></SearchBox>
        <TaskSlot><Cortana /></TaskSlot>
        <TaskSlot><TaskView /></TaskSlot>
        <TaskSlot $w={23}><Grip /></TaskSlot>
        {apps.map((a, i) => (
          <AppSlot key={i} $w={a.w} $active={a.active}>
            <AppIcon>{a.icon}</AppIcon>
            <Underline $on={a.on} />
          </AppSlot>
        ))}
        <TaskSlot $w={29} $ml={11}><HelpIcon /></TaskSlot>
        {tray.map(([kind, w]) => <TaskSlot key={kind} $w={w}><TrayIcon kind={kind} /></TaskSlot>)}
        <Clock><Text $ls={-0.5}>19:25</Text><Text $ls={-0.5}>08/04/2021</Text></Clock>
        <TaskSlot $w={35}><TrayIcon kind="notifications" /></TaskSlot>
      </Taskbar>
    </Desktop>
  );
}
